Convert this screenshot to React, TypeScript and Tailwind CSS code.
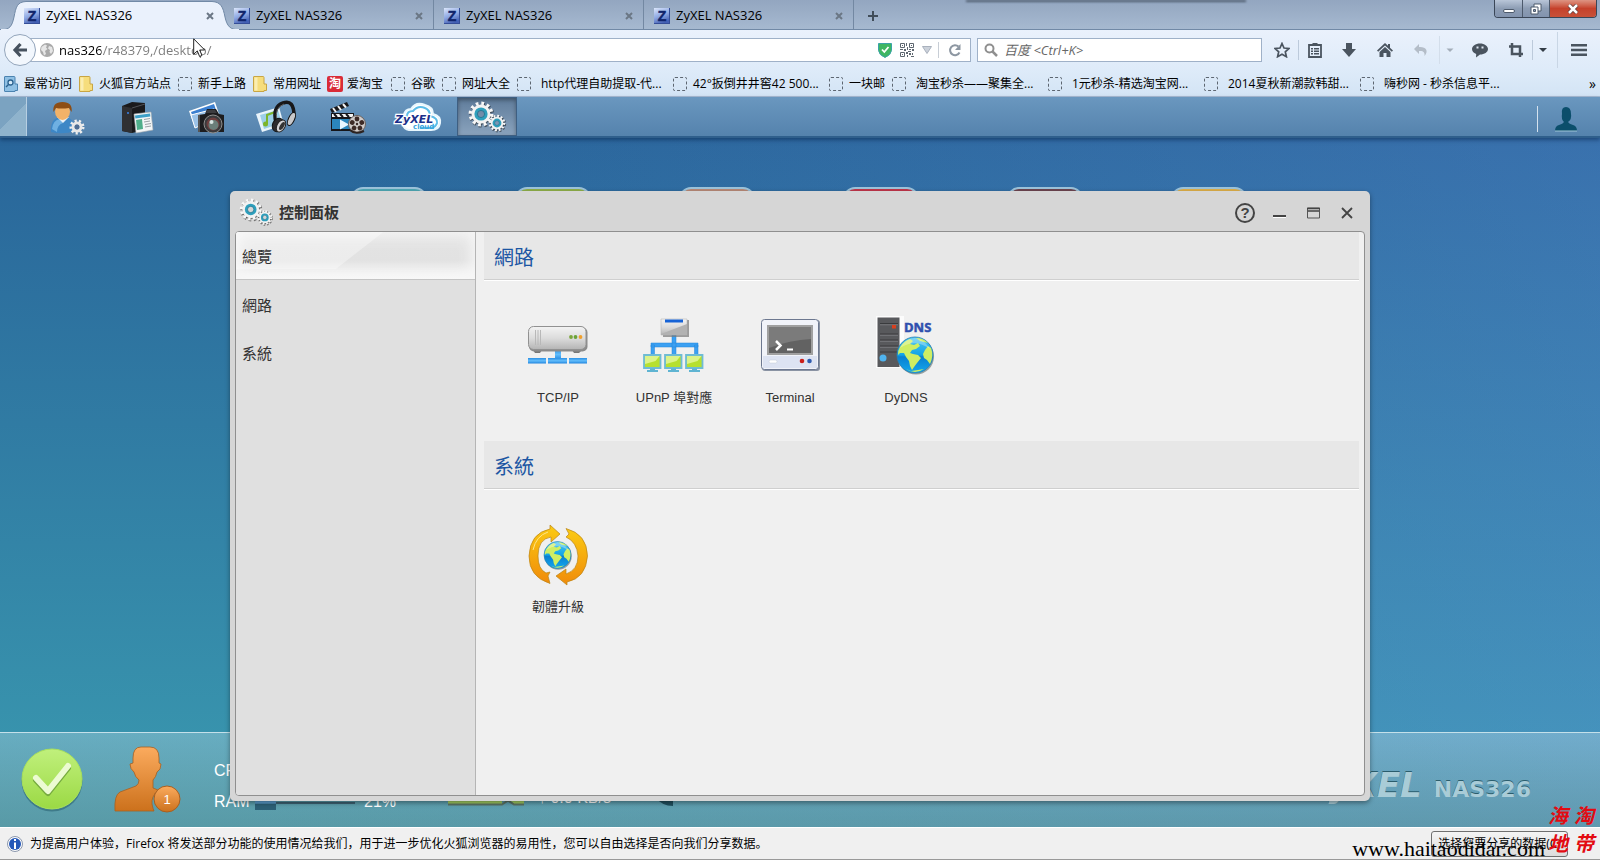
import type { ReactNode } from "react";

function Favicon() {
  return (
    <svg viewBox="0 0 16 16" className="size-4 shrink-0" aria-hidden="true">
      <defs>
        <linearGradient id="fav" x1="0" y1="0" x2="0.4" y2="1">
          <stop offset="0" stopColor="#dbe6fb" />
          <stop offset="0.55" stopColor="#8fa9e4" />
          <stop offset="1" stopColor="#4460b4" />
        </linearGradient>
      </defs>
      <rect width="16" height="16" fill="url(#fav)" />
      <path d="M0 15.500h16M15.500 0v16" stroke="#354e97" />
      <text x="8" y="13" textAnchor="middle" fontSize="14" fontWeight="bold" fontFamily="Liberation Sans, sans-serif" fill="#10246b" stroke="#10246b" strokeWidth="0.500">
        Z
      </text>
    </svg>
  );
}

function Gear({ cx, cy, r }: { cx: number; cy: number; r: number }) {
  const tooth = (2 * Math.PI * r) / 24;
  return (
    <g>
      <circle cx={cx + 0.7} cy={cy + 1} r={r} fill="none" stroke="#00000077" strokeWidth={r * 0.4} strokeDasharray={tooth} />
      <circle cx={cx + 0.5} cy={cy + 0.8} r={r * 0.88} fill="none" stroke="#00000066" strokeWidth="1.500" />
      <circle cx={cx} cy={cy} r={r} fill="none" stroke="#f7f7f7" strokeWidth={r * 0.36} strokeDasharray={tooth} />
      <circle cx={cx} cy={cy} r={r * 0.66} fill="none" stroke="#f2f2f2" strokeWidth={r * 0.5} />
      <circle cx={cx} cy={cy} r={r * 0.48} fill="none" stroke="#2f9fbc" strokeWidth={r * 0.3} />
      <circle cx={cx} cy={cy} r={r * 0.34} fill="none" stroke="#1b6f8b" strokeWidth={r * 0.07} />
    </g>
  );
}

function Globe({ cx, cy, r }: { cx: number; cy: number; r: number }) {
  return (
    <g transform={`translate(${cx} ${cy}) scale(${r / 18})`}>
      <circle cx="1" cy="1.5" r="18" fill="#5b6a6a" opacity="0.6" />
      <circle r="18" fill="url(#ocean)" stroke="#2c7fae" strokeWidth="0.8" />
      <path d="M-15-8Q-11-14-5-16L-2-14-5-11-1-10 3-12 5-9 1-6-3-5-5-2-2-1 3 0 6 3 2 8-1 12-3 15-5 11-6 6-9 2-11-2-15-2-17 0Q-17-5-15-8Z" fill="#cfee63" />
      <path d="M1-17Q8-17 13-12L9-13 5-14Z" fill="#cfee63" />
      <path d="M13-9L16-7Q19 1 15 9L12 5 9 3 8-1 10-5Z" fill="#cfee63" />
      <path d="M-9 14L-4 16 3 15 9 14Q0 20-9 14" fill="#cfee63" />
      <path d="M-15-7Q0-17 15-6Q8-17 0-17Q-10-17-15-7" fill="#fff" opacity="0.3" />
    </g>
  );
}

function SharedDefs() {
  return (
    <svg className="absolute size-0" aria-hidden="true">
      <defs>
        <linearGradient id="ocean" x1="0" y1="0" x2="0" y2="1">
          <stop offset="0" stopColor="#4cc6f2" />
          <stop offset="0.5" stopColor="#12a4e6" />
          <stop offset="0.55" stopColor="#0a7fd0" />
          <stop offset="1" stopColor="#13a9ee" />
        </linearGradient>
        <linearGradient id="metal" x1="0" y1="0" x2="0" y2="1">
          <stop offset="0" stopColor="#f3f3f3" />
          <stop offset="0.5" stopColor="#dcdcdc" />
          <stop offset="1" stopColor="#b4b4b4" />
        </linearGradient>
        <linearGradient id="wire" x1="0" y1="0" x2="0" y2="1">
          <stop offset="0" stopColor="#2b8fe4" />
          <stop offset="0.5" stopColor="#62bdfb" />
          <stop offset="1" stopColor="#1f84de" />
        </linearGradient>
        <linearGradient id="amber" x1="0" y1="0" x2="0" y2="1">
          <stop offset="0" stopColor="#fbcb13" />
          <stop offset="1" stopColor="#f08b0a" />
        </linearGradient>
        <linearGradient id="orange" x1="0" y1="0" x2="0" y2="1">
          <stop offset="0" stopColor="#fbab5e" />
          <stop offset="1" stopColor="#cc711c" />
        </linearGradient>
        <linearGradient id="lime" x1="0" y1="0" x2="0" y2="1">
          <stop offset="0" stopColor="#c0f07c" />
          <stop offset="1" stopColor="#9bd944" />
        </linearGradient>
      </defs>
    </svg>
  );
}

function BrowserTab({ active }: { active?: boolean }) {
  return (
    <div className={`relative flex h-[30px] w-[210px] items-center gap-1.5 pt-0.5 pr-2 pl-2.5 ${active ? "" : "border-r border-[#7388a2]"}`}>
      {active && (
        <svg viewBox="0 0 240 30" preserveAspectRatio="none" className="absolute top-0 -left-3.5 h-[30px] w-[240px]" aria-hidden="true">
          <path d="M0 30C10 30 12 26 14 17C16 7 17 2 26 1.500H212C221 2 223 7 225 17C227 26 230 30 240 30Z" fill="#eaf1fc" stroke="#7189a6" />
          <path d="M1 30H239" stroke="#eaf1fc" strokeWidth="2" />
        </svg>
      )}
      <span className="relative flex">
        <Favicon />
      </span>
      <button className="relative flex-1 text-left text-[13px] whitespace-nowrap">ZyXEL NAS326</button>
      <button aria-label="Close tab" className="relative flex size-3 items-center justify-center">
        <svg viewBox="0 0 8 8" className="size-2" aria-hidden="true">
          <path d="M1 1l6 6M7 1l-6 6" stroke="#6b7785" strokeWidth="2" />
        </svg>
      </button>
    </div>
  );
}

function TabStrip() {
  return (
    <div className="relative flex h-[30px] items-center border-b border-[#7189a6] bg-linear-to-b from-[#93a6c0] to-[#a6b9d0] pl-3.5">
      <div className="absolute top-0 left-[966px] h-0.5 w-[280px] bg-[#4c5a6b] blur-[1px]" />
      <BrowserTab active />
      <BrowserTab />
      <BrowserTab />
      <BrowserTab />
      <button aria-label="New tab" className="mt-0.5 ml-3 flex size-3.5 items-center justify-center">
        <svg viewBox="0 0 12 12" className="size-3" aria-hidden="true">
          <path d="M6 1v10M1 6h10" stroke="#414d59" strokeWidth="2" />
        </svg>
      </button>
      <div className="mr-[3px] ml-auto flex h-[18px] self-start overflow-hidden rounded-b border border-t-0 border-[#3a4657]">
        <button aria-label="Minimize" className="flex w-7 items-center justify-center border-r border-[#4d5a6c] bg-linear-to-b from-[#b9c6d8] via-[#8d9db4] via-50% to-[#8293ae]">
          <span className="mt-1 h-1 w-3 rounded-xs border border-[#4d5a6c] bg-white" />
        </button>
        <button aria-label="Restore" className="flex w-[27px] items-center justify-center border-r border-[#4d5a6c] bg-linear-to-b from-[#b9c6d8] via-[#8d9db4] via-50% to-[#8293ae]">
          <svg viewBox="0 0 12 12" className="size-3" aria-hidden="true">
            <path d="M4 1h7v7H4z" fill="#fff" stroke="#4d5a6c" />
            <path d="M1 4h7v7H1z" fill="#fff" stroke="#4d5a6c" />
            <path d="M3.500 6.500h2v2h-2z" fill="#8d9db4" stroke="#4d5a6c" />
          </svg>
        </button>
        <button aria-label="Close" className="flex w-[46px] items-center justify-center bg-linear-to-b from-[#dd9483] via-[#c5412b] via-50% to-[#c85138]">
          <svg viewBox="0 0 12 10" className="h-2.5 w-3" aria-hidden="true">
            <path d="M2 1l8 8M10 1L2 9" stroke="#5b3a3a" strokeWidth="4" />
            <path d="M2 1l8 8M10 1L2 9" stroke="#fff" strokeWidth="2.500" />
          </svg>
        </button>
      </div>
    </div>
  );
}

function ToolButton({ label, size, children }: { label: string; size: string; children: ReactNode }) {
  return (
    <button aria-label={label} className={`flex h-7 shrink-0 items-center justify-center ${size}`}>
      <svg viewBox="0 0 16 16" className="size-4" fill="#4a545f" aria-hidden="true">
        {children}
      </svg>
    </button>
  );
}

function NavBar() {
  return (
    <div className="flex h-10 items-center bg-linear-to-b from-[#eaf1fc] to-[#deebf9]">
      <button aria-label="Back" className="z-10 ml-1 flex size-8 shrink-0 items-center justify-center rounded-full border border-[#93a5bb] bg-[#f2f7fd]">
        <svg viewBox="0 0 16 16" className="size-4" aria-hidden="true">
          <path d="M8.500 2L3 8l5.500 6M3.500 8H15" fill="none" stroke="#46525f" strokeWidth="3.200" />
        </svg>
      </button>
      <div className="-ml-2 flex h-6 min-w-0 flex-1 items-center border border-[#9fb1c8] bg-white pl-[11px]">
        <svg viewBox="0 0 14 14" className="size-3.5 shrink-0" aria-hidden="true">
          <circle cx="7" cy="7" r="7" fill="#a9a9a9" />
          <path d="M1.500 4L5 1.500l2 1-1 2 1.500 1.500L5 8l1 3-2 1.500L3 9 1 7zM9 3l3 1 1 4-2 3-1.500-2L10 7 8 5.500z" fill="#e6e6e6" />
        </svg>
        <input
          aria-label="Address"
          defaultValue="nas326/r48379,/desktop/"
          className="ml-[5px] h-5 min-w-0 flex-1 bg-linear-to-r from-black from-[42px] to-[#7b7b7b] to-[42px] bg-clip-text text-[13px] text-transparent outline-none"
        />
        <svg viewBox="0 0 14 16" className="h-4 w-3.5" aria-hidden="true">
          <path d="M.5 1.500h13v7Q13 13 7 15.500 1 13 .5 8.500z" fill="#3fb663" stroke="#3aa3a8" />
          <path d="M4 7.500l2.300 2.500L10.500 5" fill="none" stroke="#fff" strokeWidth="1.800" />
        </svg>
        <svg viewBox="0 0 14 14" className="ml-2 size-3.5" aria-hidden="true">
          <path d="M.5.5h4v4h-4zM9.500.5h4v4h-4zM.5 9.500h4v4h-4z" fill="none" stroke="#5e6770" />
          <path d="M2 2h1v1H2zM11 2h1v1h-1zM2 11h1v1H2zM6 0h1v3H6zM7 4h1v3H7zM0 6h3v1H0zM4 6h2v2H4zM9 6h2v1H9zM12 6h2v2h-2zM6 9h2v2H6zM8 8h3v1H8zM9 10h2v2H9zM12 10h1v2h-1zM7 12h1v2H7zM11 13h3v1h-3z" fill="#5e6770" />
        </svg>
        <svg viewBox="0 0 10 8" className="ml-2 h-2 w-2.5" aria-hidden="true">
          <path d="M.5.5h9L5 7.500z" fill="#cbd1da" stroke="#a9b1bd" />
        </svg>
        <button aria-label="Reload" className="ml-1.5 flex h-4 w-8 items-center justify-center border-l border-[#c8ced6]">
          <svg viewBox="0 0 14 14" className="size-3.5" aria-hidden="true">
            <path d="M11.500 9.500A5 5 0 1 1 10.500 3.500" fill="none" stroke="#8d97a2" strokeWidth="2" />
            <path d="M12.500 1v6H7z" fill="#8d97a2" />
          </svg>
        </button>
      </div>
      <div className="ml-1.5 flex h-6 w-[285px] shrink-0 items-center border border-[#9fb1c8] bg-white pl-1.5">
        <svg viewBox="0 0 14 14" className="size-3.5 shrink-0" aria-hidden="true">
          <circle cx="5.500" cy="5.500" r="4" fill="none" stroke="#8f8f8f" strokeWidth="2" />
          <path d="M8.500 8.500L13 13" stroke="#8f8f8f" strokeWidth="2.500" />
        </svg>
        <input aria-label="Search" placeholder="百度 <Ctrl+K>" className="ml-1.5 h-5 min-w-0 flex-1 text-[13px] outline-none placeholder:text-[#666] placeholder:italic" />
      </div>
      <div className="ml-1 flex items-center">
        <ToolButton label="Bookmark" size="w-8">
          <path d="M8 1.500l2 4.500 5 .5-3.700 3.300 1.100 4.900L8 12.200 3.600 14.700l1.100-4.900L1 6.500 6 6z" fill="none" stroke="#4a545f" strokeWidth="1.700" />
        </ToolButton>
        <span className="h-5 border-l border-[#bccadb]" />
        <ToolButton label="Bookmarks list" size="w-8">
          <path d="M2 3h12v12H2z" fill="none" stroke="#4a545f" strokeWidth="1.800" />
          <path d="M5.500 1h5v3h-5zM4 6h2v1.500H4zM7 6h5v1.500H7zM4 8.500h2V10H4zM7 8.500h5V10H7zM4 11h2v1.500H4zM7 11h5v1.500H7z" />
        </ToolButton>
        <ToolButton label="Downloads" size="w-9">
          <path d="M5 1h6v6h4l-7 8-7-8h4z" />
        </ToolButton>
        <ToolButton label="Home" size="w-9">
          <path d="M8 1L0 8.500l1.200 1.200L8 3.500l6.800 6.200L16 8.500 13 5.700V2h-2v1.800z" />
          <path d="M8 5l5.500 5v5h-4v-4h-3v4h-4v-5z" />
        </ToolButton>
        <ToolButton label="Undo" size="w-9">
          <path d="M6 2L1 7l5 5V9c4-.5 6 1 5.500 5C16 9 13 4.500 6 5z" fill="#b4bdc8" />
        </ToolButton>
        <span className="h-7 border-l border-[#d3deeb]" />
        <ToolButton label="Undo menu" size="w-5">
          <path d="M4.500 6.500h7L8 10z" fill="#a3adb9" />
        </ToolButton>
        <ToolButton label="Chat" size="w-10">
          <path d="M8 1.500c4.500 0 8 2.500 8 5.500s-3.500 5.500-8 5.500L4 15.500 4.200 12C1.500 11 0 9.200 0 7c0-3 3.500-5.500 8-5.500z" />
          <path d="M4.500 4.500h2v2h-2zM9.500 4.500h2v2h-2z" fill="#dfe8f3" />
        </ToolButton>
        <ToolButton label="Screenshot" size="w-8">
          <path d="M4 1v11h11M1 4.500h11V15" fill="none" stroke="#4a545f" strokeWidth="2.500" />
        </ToolButton>
        <span className="h-5 border-l border-[#bccadb]" />
        <ToolButton label="Screenshot menu" size="w-5">
          <path d="M4 6h8l-4 4z" fill="#333c46" />
        </ToolButton>
        <span className="ml-1 h-9 border-l border-[#c9d6e5]" />
        <ToolButton label="Menu" size="w-[42px]">
          <path d="M0 2h16v2.500H0zM0 6.800h16v2.500H0zM0 11.600h16v2.500H0z" />
        </ToolButton>
      </div>
    </div>
  );
}

function BookmarkIcon({ kind }: { kind: string }) {
  if (kind === "folder")
    return (
      <svg viewBox="0 0 14 16" className="h-4 w-3.5 shrink-0" aria-hidden="true">
        <path d="M.5 1Q.5.500 1 .5h9q1 0 1 1V8h2.500v6.500H11v1H1q-.5 0-.5-.5z" fill="#f6dd7c" stroke="#c8a544" />
        <path d="M1.500 1.500h3v13h-3z" fill="#fbedb0" />
      </svg>
    );
  if (kind === "recent")
    return (
      <svg viewBox="0 0 14 16" className="h-4 w-3.5 shrink-0" aria-hidden="true">
        <path d="M.5 1Q.5.500 1 .5h9q1 0 1 1V8h2.500v6.500H11v1H1q-.5 0-.5-.5z" fill="#8fc0e4" stroke="#4b83b0" />
        <circle cx="6.500" cy="6.500" r="2.500" fill="#d8ecfa" stroke="#2c628f" strokeWidth="1.300" />
        <path d="M4.500 8.500L2 11" stroke="#2c628f" strokeWidth="1.500" />
      </svg>
    );
  if (kind === "tao")
    return <span className="flex size-4 shrink-0 items-center justify-center rounded-xs bg-[#d92b38] text-[12px] leading-4 font-bold text-white">淘</span>;
  return <span className="size-3.5 shrink-0 rounded-xs border border-dashed border-[#5d6671]" />;
}

function BookmarksBar() {
  return (
    <nav className="flex h-[27px] items-center overflow-hidden border-b border-[#a9bdd4] bg-linear-to-b from-[#deebf9] to-[#d3e4f5] pt-0.5 pl-1">
      {bookmarks.map((b) => (
        <a key={b.label} href="#" className={`flex shrink-0 items-center whitespace-nowrap ${b.size}`}>
          <BookmarkIcon kind={b.kind} />
          <span>{b.label}</span>
        </a>
      ))}
      <button className="mr-1 ml-auto text-[14px] leading-4" aria-label="More bookmarks">
        »
      </button>
    </nav>
  );
}

function UserSettingsIcon() {
  return (
    <>
      <path d="M2 31Q1 17 12 16h4q10 1 10 14-12 4-24 1z" fill="#3d87c6" />
      <path d="M3 28Q4 19 11 18l3 4Q8 24 8 31" fill="#6fb0e2" />
      <path d="M8 16l6 6 6-6z" fill="#e9f1f8" />
      <ellipse cx="13.500" cy="10.500" rx="7.500" ry="8.500" fill="#f2b268" />
      <path d="M4.500 11Q3 1 13.500 1T22.500 11L20 7Q12 8 7 7z" fill="#8d4d14" />
      <circle cx="28" cy="26" r="6" fill="none" stroke="#eee" strokeWidth="3" strokeDasharray="2.100" />
      <circle cx="28" cy="26" r="4" fill="none" stroke="#e8e8e8" strokeWidth="3" />
      <circle cx="28" cy="26" r="2.400" fill="#4f6d93" />
    </>
  );
}

function ServerIcon() {
  return (
    <>
      <path d="M3 5L13 1l13 1v27L13 32 3 30z" fill="#1a1a1c" />
      <path d="M3 5L13 7V32L3 30z" fill="#2f3033" />
      <path d="M13 7L26 3" stroke="#505257" />
      <circle cx="9" cy="12" r="0.900" fill="#3b8dff" />
      <path d="M15 13l17-2 2 18-17 3z" fill="#f3f6f7" stroke="#a7adb0" strokeWidth="0.600" />
      <path d="M16 14.500l15-2 .4 3-15 2z" fill="#3da0c8" />
      <path d="M17 19l6-1 1 10-6 1z" fill="#4fae8a" />
      <path d="M25 18.500l6-1M25 21l6-1M26 23.500l6-1M26 26l6-1" stroke="#9aa2a6" />
    </>
  );
}

function CameraIcon() {
  return (
    <>
      <path d="M0 10L26 1l4 12L5 24z" fill="#fff" />
      <path d="M2 11L25 3l3 9L6 22z" fill="#3b7fd0" />
      <path d="M2 14L25 8l3 9L6 27z" fill="#9cc3e8" stroke="#fff" />
      <path d="M9 14l7-1 2-5h9l3 5 5 1v17H9z" fill="#1d1d1f" />
      <path d="M18 9h8l2 3H17z" fill="#3c3c3f" />
      <circle cx="24" cy="23" r="9" fill="#3a3a3c" stroke="#8e8e8e" />
      <circle cx="24" cy="23" r="6.500" fill="#6d3f3f" />
      <circle cx="24.500" cy="24" r="5" fill="#6b7f7a" />
      <circle cx="22.500" cy="21" r="2" fill="#d8e4e2" />
      <path d="M10 14v17" stroke="#555" strokeWidth="2" />
    </>
  );
}

function MusicIcon() {
  return (
    <>
      <path d="M-3 13L20 6l5 18L3 31z" fill="#e9f4fb" />
      <path d="M1 14L19 9l4 13L5 28z" fill="#9ccfe8" />
      <path d="M8 23V14l8-3v9" fill="none" stroke="#7cb52b" strokeWidth="2" />
      <circle cx="6.500" cy="23" r="2.500" fill="#7cb52b" />
      <path d="M17 22Q13 6 24 2T35 15" fill="none" stroke="#18181a" strokeWidth="3.500" />
      <path d="M18 19Q15 7 25 3" fill="none" stroke="#666" />
      <ellipse cx="19" cy="24" rx="5.500" ry="7" transform="rotate(25 19 24)" fill="#2c2c2e" stroke="#111" />
      <ellipse cx="22" cy="25" rx="4" ry="6.500" transform="rotate(30 22 25)" fill="#d4d4d6" stroke="#222" />
      <ellipse cx="23" cy="25" rx="2" ry="4.500" transform="rotate(30 23 25)" fill="#333" />
      <ellipse cx="32.500" cy="18" rx="3" ry="7" transform="rotate(25 32.500 18)" fill="#c9c9cb" stroke="#111" />
    </>
  );
}

function VideoIcon() {
  return (
    <>
      <path d="M2 12h23v18H2z" fill="#16161a" />
      <path d="M1 8L18 1l2 4L3 12z" fill="#17171a" />
      <path d="M4 7l3 4M9 5l3 4M14 3l3 3.500" stroke="#f4f4f4" strokeWidth="2" />
      <path d="M3 13h21v3H3z" fill="#f4f4f4" />
      <path d="M5 13l3 3M11 13l3 3M17 13l3 3" stroke="#16161a" strokeWidth="2" />
      <path d="M3 18h20v10H3z" fill="#2b86bc" />
      <path d="M11 18.500l9 5-9 5z" fill="#e9f7ff" />
      <circle cx="28" cy="23" r="8.500" fill="#cfcac8" stroke="#6b625f" />
      {[0, 72, 144, 216, 288].map((a) => (
        <circle key={a} cx="28" cy="18" r="2.400" fill="#3d2a26" transform={`rotate(${a} 28 23)`} />
      ))}
      <circle cx="28" cy="23" r="1.200" fill="#3d2a26" />
      <path d="M21 29Q26 34 35 30" fill="none" stroke="#2c2220" strokeWidth="2" />
    </>
  );
}

function CloudIcon() {
  return (
    <>
      <path d="M4 24Q-2 17 5 14Q6 8 12 8Q17 0 26 4Q34 6 34 13Q42 15 41 22Q40 29 32 29H10Q5 28 4 24z" fill="#fff" stroke="#e8f7fe" strokeWidth="2" />
      <path d="M6 22Q2 17 8 15Q8 10 14 10Q19 4 26 7Q31 9 31 15Q39 17 38 22Q37 26 32 27H21" fill="none" stroke="#5cbde8" strokeWidth="2" />
      <text x="-4" y="22" fontSize="11" fontWeight="bold" fontStyle="italic" fontFamily="DejaVu Sans, sans-serif" fill="#1b2f8a" stroke="#fff" strokeWidth="2.500" paintOrder="stroke">
        ZyXEL
      </text>
      <text x="14" y="28" fontSize="7" fontWeight="bold" fontFamily="DejaVu Sans, sans-serif" fill="#35a4dc">
        cloud
      </text>
    </>
  );
}

function SettingsIcon() {
  return (
    <>
      <Gear cx={12} cy={13} r={10.5} />
      <Gear cx={28} cy={22} r={7} />
    </>
  );
}

function DeskToolbar() {
  return (
    <div className="relative z-20 flex h-[41px] items-center border-b-2 border-[#2f5f8c] bg-linear-to-b from-[#6a97bf] to-[#5583ad] shadow-[0_2px_4px_rgba(0,30,70,0.5)]">
      <button aria-label="Show desktop" className="mr-2.5 h-full w-[27px] border-r border-[#b7cfe2] bg-linear-135 from-[#7ba3c1] from-50% to-[#8fb3cc] to-50%" />
      <div className="flex h-full gap-2.5">
        {apps.map((a) => (
          <button
            key={a.label}
            aria-label={a.label}
            className={`flex w-[60px] items-center justify-center pt-0.5 ${a.active ? "border border-[#3e5f82] bg-linear-to-b from-[#5f7c9b] to-[#8aa3bd] shadow-[inset_0_2px_4px_rgba(0,0,0,0.35)]" : ""}`}
          >
            <svg viewBox="0 0 36 34" className="h-[34px] w-9 overflow-visible" aria-hidden="true">
              {a.icon}
            </svg>
          </button>
        ))}
      </div>
      <button aria-label="Account" className="mt-1 ml-auto flex h-[26px] w-[63px] items-center border-l border-[#d5e2ee] pl-4">
        <svg viewBox="0 0 24 26" className="h-[26px] w-6" aria-hidden="true">
          <path d="M8 8Q7 1 12 1t5 7q1 5-3 8 1 2 5 3 4 1 4 6H1q0-5 4-6 4-1 5-3-3-3-2-8z" fill="#0b4e6b" />
          <path d="M1 25h22" stroke="#9fc6d8" />
        </svg>
      </button>
    </div>
  );
}

function TcpIcon() {
  return (
    <>
      <path d="M5 34h9l-2 3H7zM44 34h10l-3 3h-5z" fill="#777" />
      <path d="M27 33h6v11h-6z" fill="url(#wire)" />
      <path d="M0 42h18v5.500H0zM20 42h19v5.500H20zM41 42h18v5.500H41z" fill="url(#wire)" />
      <rect x="1" y="11.500" width="58.500" height="24" rx="5" fill="#8b8b8b" />
      <rect x="0.500" y="10.500" width="57.500" height="23" rx="5" fill="url(#metal)" stroke="#919191" />
      <path d="M7.500 14v15M10 14v15M12.500 14v15" stroke="#b8b8b8" />
      <circle cx="43" cy="21" r="1.900" fill="#7ba63a" />
      <circle cx="47.500" cy="21" r="1.900" fill="#6aa238" />
      <circle cx="52.500" cy="21" r="1.900" fill="#f0a02c" />
    </>
  );
}

function UpnpIcon() {
  return (
    <>
      <path d="M28 19h4v20h-4zM7 27h47v4H7zM7 29h3.500v10H7zM50.500 29H54v10h-3.500z" fill="#3ba0f2" stroke="#2384d8" strokeWidth="0.500" />
      <path d="M19 4h26v17H19z" fill="#777" opacity="0.700" />
      <path d="M17 3h26v16H17z" fill="url(#metal)" stroke="#adadad" strokeWidth="0.500" />
      <path d="M17 18L43 8v11H17z" fill="#b2b2b2" />
      <path d="M21 3.500h18v3H21z" fill="#1663d6" />
      {[0, 21, 42].map((x) => (
        <g key={x} transform={`translate(${x} 0)`}>
          <path d="M0 39h16.500v13H0z" fill="#b6e02f" stroke="#6fbcd4" strokeWidth="1.800" />
          <path d="M1 40h14.500l-4 5-10.500 3z" fill="#dcf38a" />
          <path d="M6 52.500h5v1.500h3v2H3v-2h3z" fill="#5fb4d2" />
        </g>
      ))}
    </>
  );
}

function TerminalIcon() {
  return (
    <>
      <rect x="2" y="4" width="58" height="51" rx="3" fill="#8a93a3" />
      <rect x="1.500" y="3.500" width="57" height="50" rx="3" fill="#f1f3f9" stroke="#6d7890" />
      <path d="M3 40h54v12H3z" fill="#dde3f2" />
      <path d="M7 9h46v30H7z" fill="#a0a0a0" />
      <path d="M9 11h42v26H9z" fill="#626262" />
      <path d="M9 11h42v12Q30 24 9 32z" fill="#7b7b7b" />
      <path d="M16 25l4.500 4.500L16 34" fill="none" stroke="#fff" strokeWidth="2.500" />
      <path d="M27 33.500h6" stroke="#fff" strokeWidth="2" />
      <rect x="9" y="44" width="8" height="3" rx="1.500" fill="#fff" stroke="#c3c9d5" strokeWidth="0.500" />
      <circle cx="42" cy="45" r="2.300" fill="#cc1f1a" />
      <circle cx="49.500" cy="45" r="2.300" fill="#2f5bb0" />
    </>
  );
}

function DnsIcon() {
  return (
    <>
      <path d="M0 0h28v52H0z" fill="#fff" opacity="0.800" />
      <path d="M1.500 1.500h22V51h-22z" fill="#58595c" />
      <path d="M4 7.500h18M4 18h18M4 24h18M4 30h18M4 36h18" stroke="#3a3b3d" strokeWidth="1.200" />
      <path d="M4 8.800h18M4 19.300h18M4 25.300h18M4 31.300h18" stroke="#7d8084" strokeWidth="0.800" />
      <path d="M16 9h4v3.500h-4z" fill="#d8401f" />
      <circle cx="7" cy="42" r="3.500" fill="#4fb3ee" />
      <text x="28" y="16" fontSize="13" fontWeight="bold" fontFamily="Open Sans, sans-serif" fill="#2f4fae" stroke="#2f4fae" strokeWidth="0.500">
        DNS
      </text>
      <Globe cx={39} cy={39} r={18} />
    </>
  );
}

function FirmwareIcon() {
  return (
    <>
      <g fill="url(#amber)" stroke="#b9851a" strokeWidth="0.700">
        <path d="M22 58.500Q1 52 1 31Q2 8 22 4V0l10 9-9 8v-5Q10 14 10 31Q10 44 18 48l4-1-2 4z" />
        <path d="M38 3.500Q59 9 59.500 31Q58 53 39 57v3l-11-9 10-7v5Q50 45 50 31Q49 17 38 12l3-3z" />
      </g>
      <path d="M5 25Q8 11 20 7" fill="none" stroke="#fde58a" />
      <Globe cx={29.5} cy={30} r={13.5} />
    </>
  );
}

function Section({ title, items }: { title: string; items: { label: string; icon: ReactNode }[] }) {
  return (
    <section>
      <h2 className="flex h-12 items-center border-b border-[#cfcfcf] bg-[#e7e7e7] pt-1 pl-2.5 text-[20px] text-[#1c56a3] shadow-[0_1px_0_#fff]">{title}</h2>
      <div className="flex h-[161px] pt-9 pl-4">
        {items.map((item) => (
          <button key={item.label} className="flex w-[116px] flex-col items-center gap-3 text-[13px] leading-5 text-[#333]">
            <svg viewBox="0 0 60 60" className="size-[60px] overflow-visible" aria-hidden="true">
              {item.icon}
            </svg>
            {item.label}
          </button>
        ))}
      </div>
    </section>
  );
}

function ControlPanel() {
  return (
    <div className="absolute inset-x-[230px] top-[53px] bottom-[26px] z-10 flex flex-col rounded-[5px] bg-[#d6d6d6] px-[5px] pb-[5px] font-['Liberation_Sans','Noto_Sans_CJK_TC',sans-serif] text-[15px] shadow-[0_2px_5px_rgba(0,0,0,0.4)]">
      <header className="flex h-10 shrink-0 items-center pt-1 pr-2 pl-[5px]">
        <svg viewBox="0 0 36 34" className="h-[30px] w-8 overflow-visible" aria-hidden="true">
          <SettingsIcon />
        </svg>
        <h1 className="ml-[7px] font-bold text-[#333]">控制面板</h1>
        <div className="ml-auto flex items-center gap-3">
          <button aria-label="Help" className="mr-0.5 flex size-5 items-center justify-center rounded-full border-2 border-[#444] text-[15px] leading-4 font-bold text-[#444]">
            ?
          </button>
          <button aria-label="Minimize window" className="flex size-5 items-center justify-center">
            <svg viewBox="0 0 13 12" className="h-3 w-[13px]" aria-hidden="true">
              <path d="M0 9h13" stroke="#444" strokeWidth="2" />
              <path d="M0 10.500h13" stroke="#fff" />
            </svg>
          </button>
          <button aria-label="Maximize window" className="ml-0.5 flex size-5 items-center justify-center">
            <svg viewBox="0 0 13 12" className="h-3 w-[13px]" aria-hidden="true">
              <path d="M.5 1h12v10H.5z" fill="none" stroke="#555" />
              <path d="M0 1.500h13M1 4h11" stroke="#444" strokeWidth="1.500" />
            </svg>
          </button>
          <button aria-label="Close window" className="ml-0.5 flex size-5 items-center justify-center">
            <svg viewBox="0 0 12 12" className="size-3" aria-hidden="true">
              <path d="M1 1l10 10M11 1L1 11" stroke="#444" strokeWidth="1.800" />
            </svg>
          </button>
        </div>
      </header>
      <div className="flex min-h-0 flex-1 overflow-hidden rounded border border-[#8f8f8f] bg-[#f0f0f0]">
        <nav className="flex w-60 shrink-0 flex-col border-r border-[#b5b5b5] bg-[#e0e0e0] text-[#333]">
          <a href="#" className="relative flex h-12 items-center border-b border-[#c4c4c4] bg-linear-to-b from-[#e4e4e4] via-[#e2e2e2] via-60% to-[#fafafa] pt-1 pl-1.5 shadow-[inset_0_0_14px_4px_#f6f6f6]">
            <svg viewBox="0 0 240 48" preserveAspectRatio="none" className="absolute inset-0 size-full" aria-hidden="true">
              <path d="M0 0H148L100 38H0z" fill="#fff" opacity="0.350" />
            </svg>
            <span className="relative">總覽</span>
          </a>
          <a href="#" className="flex h-12 items-center pt-1 pl-1.5">
            網路
          </a>
          <a href="#" className="flex h-12 items-center pt-1 pl-1.5">
            系統
          </a>
        </nav>
        <div className="flex-1 pr-[5px] pl-2">
          <Section title="網路" items={networkItems} />
          <Section title="系統" items={systemItems} />
        </div>
      </div>
    </div>
  );
}

function StatusDock() {
  return (
    <div className="absolute inset-x-0 bottom-0 flex h-[95px] items-start border-t border-[#c4e0ea] bg-linear-to-b from-white/24 to-[#7d9a9a]/45 font-['Liberation_Sans',sans-serif] text-[16px] text-white">
      <svg viewBox="0 0 62 64" className="mt-[15px] ml-[21px] h-16 w-[62px] shrink-0" aria-hidden="true">
        <ellipse cx="31" cy="33" rx="30.500" ry="30.500" fill="#22586a" opacity="0.500" />
        <circle cx="31" cy="31" r="30" fill="url(#lime)" stroke="#a8e05c" />
        <path d="M15 32L27 45 47 20" fill="none" stroke="#76ab3e" strokeWidth="6" strokeLinecap="round" strokeLinejoin="round" />
        <path d="M15 30L27 43 47 18" fill="none" stroke="#ecfbd2" strokeWidth="6" strokeLinecap="round" strokeLinejoin="round" />
      </svg>
      <svg viewBox="0 0 68 68" className="mt-[13px] ml-[31px] size-[68px] shrink-0" aria-hidden="true">
        <path d="M19 12Q19 1 27 1h9Q45 1 45 12v5l2 1q0 6-4 8-1 5-4 8v8l5 2Q37 51 38 58q1 5 2 7H1Q0 49 6 46L22 40Q25 38 25 34 21 31 20 26 16 23 16 18l3-1z" fill="url(#orange)" stroke="#a85f20" strokeWidth="0.800" />
        <circle cx="53" cy="53" r="13" fill="url(#orange)" stroke="#a85f20" />
        <text x="53" y="58" textAnchor="middle" fontSize="13" fontFamily="Liberation Sans, sans-serif" fill="#fff">
          1
        </text>
      </svg>
      <div className="mt-7 ml-8 grid grid-cols-[41px_109px_84px] gap-y-[11px] leading-5">
        <span>CPU</span>
        <span />
        <span>5%</span>
        <span>RAM</span>
        <span className="mt-1 h-2 w-[100px] border-b-2 border-[#3d6273]">
          <span className="block h-3.5 w-[21px] bg-linear-to-b from-[#5c9fd0] from-50% to-[#2c5f75] to-60%" />
        </span>
        <span>21%</span>
      </div>
      <svg viewBox="0 0 80 16" className="mt-[57px] h-4 w-20 shrink-0" aria-hidden="true">
        <path d="M0 0h54v14H0zM60 9l6 5h10V4H60z" fill="#a3cf63" />
        <path d="M0 14.500h54l6-4 6 4h10" fill="none" stroke="#5b7263" strokeWidth="2" />
      </svg>
      <span className="mt-[55px] ml-2.5 leading-5">↑ 0.0 KB/s</span>
      <svg viewBox="0 0 18 18" className="mt-14 ml-11 h-[18px] w-[18px] shrink-0" aria-hidden="true">
        <path d="M0 8Q7 17 18 17V0H0z" fill="#21505f" />
      </svg>
      <div className="mt-8 mr-[69px] ml-auto flex items-baseline gap-3 font-['DejaVu_Sans',sans-serif] leading-10 font-bold text-[#a9ccd7] text-shadow-[0_-1px_0_#2b5d6d]">
        <span className="text-[34px] italic">ZyXEL</span>
        <span className="text-[22px]">NAS326</span>
      </div>
    </div>
  );
}

function NotificationBar() {
  return (
    <footer className="relative flex h-[33px] items-center border-t border-b border-t-white border-b-[#999] bg-[#f0f0f0] pr-8 pl-[7px]">
      <svg viewBox="0 0 16 16" className="size-4" aria-hidden="true">
        <circle cx="8" cy="8" r="7.500" fill="#fff" stroke="#8c98ad" />
        <circle cx="8" cy="8" r="6" fill="#2457b8" />
        <path d="M7 3h2v2H7zM7 6.500h2V13H7z" fill="#fff" />
      </svg>
      <p className="ml-[7px]">为提高用户体验，Firefox 将发送部分功能的使用情况给我们，用于进一步优化火狐浏览器的易用性，您可以自由选择是否向我们分享数据。</p>
      <button className="ml-auto h-[26px] w-[137px] rounded-[3px] border border-[#6f6f6f] bg-linear-to-b from-[#f4f4f4] to-[#dcdcdc] whitespace-nowrap">选择您要分享的数据(C)</button>
      <span className="absolute right-[55px] bottom-0 font-['Liberation_Serif',serif] text-[22px] leading-5 text-black">www.haitaodidar.com</span>
      <div className="absolute right-1.5 bottom-0.5 grid grid-cols-2 gap-x-1.5 font-['Noto_Sans_CJK_SC',sans-serif] text-[20px] leading-7 font-bold text-[#e30b12] italic">
        <span>海</span>
        <span>淘</span>
        <span>地</span>
        <span>带</span>
      </div>
    </footer>
  );
}

export default function App() {
  return (
    <main className="flex min-h-screen flex-col overflow-hidden font-['Open_Sans','Noto_Sans_CJK_SC',sans-serif] text-[12px] text-black">
      <SharedDefs />
      <TabStrip />
      <NavBar />
      <BookmarksBar />
      <DeskToolbar />
      <div className="relative min-h-[600px] flex-1 bg-[linear-gradient(100deg,transparent_20%,rgba(100,145,225,0.3)),linear-gradient(to_bottom,#29659a,#3a9ab0)]">
        <div className="absolute inset-x-0 top-[49px] flex justify-center gap-[88px] pr-0.5">
          {tiles.map((t) => (
            <span key={t} className={`size-[76px] rounded-xl border-2 border-[#9cc3da] ${t}`} />
          ))}
        </div>
        <StatusDock />
        <ControlPanel />
      </div>
      <NotificationBar />
      <svg viewBox="0 0 13 20" className="absolute top-[38px] left-[193px] z-30 h-5 w-[13px]" aria-hidden="true">
        <path d="M.7.8v15.500l3.600-3.400 2.300 5.600 2.400-1-2.300-5.500h5z" fill="#fff" stroke="#222" />
      </svg>
    </main>
  );
}

const bookmarks = [
  { label: "最常访问", kind: "recent", size: "w-[75px] gap-1.5" },
  { label: "火狐官方站点", kind: "folder", size: "w-[99px] gap-1.5" },
  { label: "新手上路", kind: "page", size: "w-[75px] gap-1.5" },
  { label: "常用网址", kind: "folder", size: "w-[74px] gap-1.5" },
  { label: "爱淘宝", kind: "tao", size: "w-16 gap-1" },
  { label: "谷歌", kind: "page", size: "w-[51px] gap-1.5" },
  { label: "网址大全", kind: "page", size: "w-[75px] gap-1.5" },
  { label: "http代理自助提取-代...", kind: "page", size: "w-[156px] gap-2.5" },
  { label: "42°扳倒井井窖42 500...", kind: "page", size: "w-[156px] gap-1.5" },
  { label: "一块邮", kind: "page", size: "w-[63px] gap-1.5" },
  { label: "淘宝秒杀——聚集全...", kind: "page", size: "w-[156px] gap-2.5" },
  { label: "1元秒杀-精选淘宝网...", kind: "page", size: "w-[156px] gap-2.5" },
  { label: "2014夏秋新潮款韩甜...", kind: "page", size: "w-[156px] gap-2.5" },
  { label: "嗨秒网 - 秒杀信息平...", kind: "page", size: "w-[156px] gap-2.5" },
];

const apps = [
  { label: "User settings", icon: <UserSettingsIcon /> },
  { label: "File browser", icon: <ServerIcon /> },
  { label: "Photo", icon: <CameraIcon /> },
  { label: "Music", icon: <MusicIcon /> },
  { label: "Video", icon: <VideoIcon /> },
  { label: "ZyXEL cloud", icon: <CloudIcon /> },
  { label: "Control panel", icon: <SettingsIcon />, active: true },
];

const tiles = ["bg-[#4fa9b5]", "bg-[#8fb04a]", "bg-[#b98a78]", "bg-[#c2364b]", "bg-[#6d4550]", "bg-[#dfb04a]"];

const networkItems = [
  { label: "TCP/IP", icon: <TcpIcon /> },
  { label: "UPnP 埠對應", icon: <UpnpIcon /> },
  { label: "Terminal", icon: <TerminalIcon /> },
  { label: "DyDNS", icon: <DnsIcon /> },
];

const systemItems = [{ label: "韌體升級", icon: <FirmwareIcon /> }];
